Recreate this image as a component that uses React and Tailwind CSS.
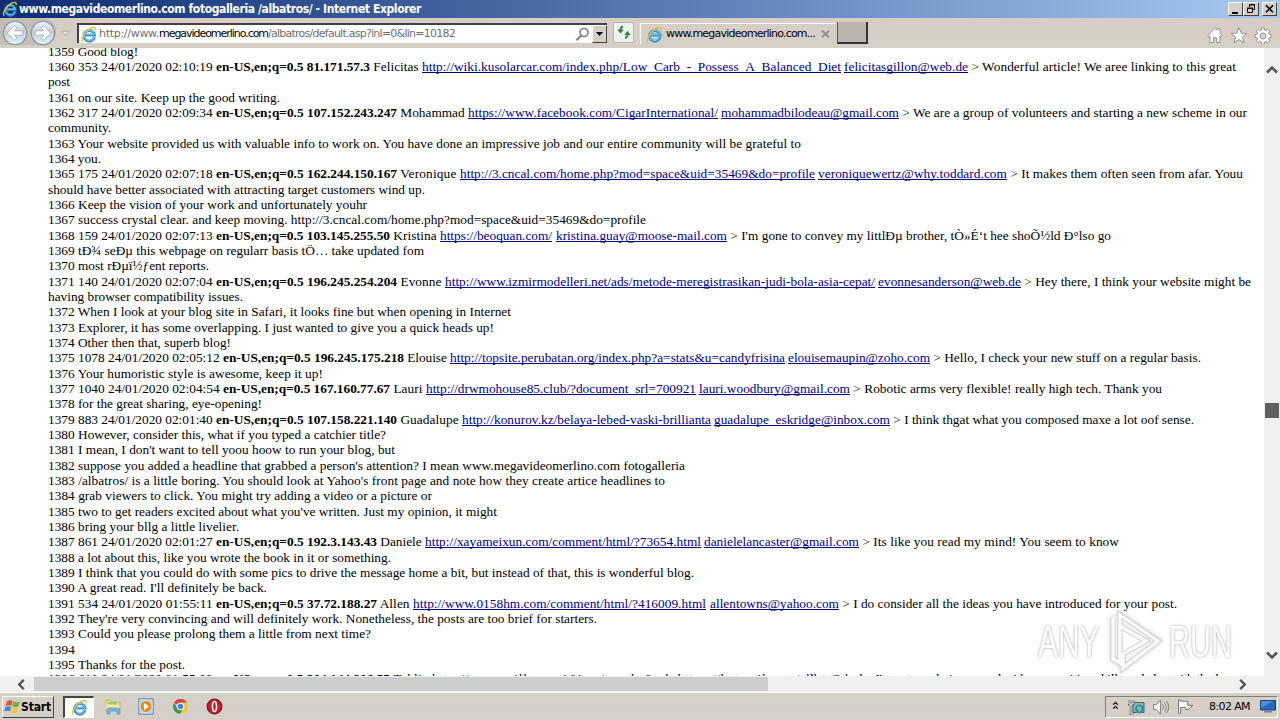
import React, { useLayoutEffect, useRef } from "react";

/* Text run stretched to a known width through letter spacing. */
function Fit({ w, className = "", children }) {
  const ref = useRef(null);
  useLayoutEffect(() => {
    const el = ref.current;
    el.style.letterSpacing = "0px";
    const natural = el.getBoundingClientRect().width;
    const n = el.textContent.length;
    if (w && n) el.style.letterSpacing = (w - natural) / n + "px";
  }, [w]);
  return (
    <span ref={ref} className={"inline-block whitespace-pre " + className}>
      {children}
    </span>
  );
}

/* Comment header: [prefix, bold, name, url, mail, message], [x of each run..., end] */
const lines = [
  ["1359 Good blog!", 138],
  [["1360 353 24/01/2020 02:10:19 ", "en-US,en;q=0.5 81.171.57.3", " Felicitas ", "http://wiki.kusolarcar.com/index.php/Low_Carb_-_Possess_A_Balanced_Diet", "felicitasgillon@web.de", " > Wonderful article! We aree linking to this great"], [216, 370, 422, 841, 844, 968, 1236]],
  ["post", 70],
  ["1361 on our site. Keep up the good writing.", 280],
  [["1362 317 24/01/2020 02:09:34 ", "en-US,en;q=0.5 107.152.243.247", " Mohammad ", "https://www.facebook.com/CigarInternational/", "mohammadbilodeau@gmail.com", " > We are a group of volunteers and starting a new scheme in our"], [216, 397, 468, 718, 721, 899, 1247]],
  ["community.", 111],
  ["1363 Your website provided us with valuable info to work on. You have done an impressive job and our entire community will be grateful to", 801],
  ["1364 you.", 101],
  [["1365 175 24/01/2020 02:07:18 ", "en-US,en;q=0.5 162.244.150.167", " Veronique ", "http://3.cncal.com/home.php?mod=space&uid=35469&do=profile", "veroniquewertz@why.toddard.com", " > It makes them often seen from afar. Youu"], [216, 397, 460, 815, 818, 1007, 1243]],
  ["should have better associated with attracting target customers wind up.", 425],
  ["1366 Keep the vision of your work and unfortunately youhr", 367],
  ["1367 success crystal clear. and keep moving. http://3.cncal.com/home.php?mod=space&uid=35469&do=profile", 646],
  [["1368 159 24/01/2020 02:07:13 ", "en-US,en;q=0.5 103.145.255.50", " Kristina ", "https://beoquan.com/", "kristina.guay@moose-mail.com", " > I'm gone to convey my littlÐµ brother, tÒ»É‘t hee shoÕ½ld Ð°lso go"], [216, 390, 440, 552, 556, 727, 1111]],
  ["1369 tÐ¾ seÐµ this webpage on regularr basis tÖ… take updated fom", 424],
  ["1370 most rÐµï½ƒent reports.", 209],
  [["1371 140 24/01/2020 02:07:04 ", "en-US,en;q=0.5 196.245.254.204", " Evonne ", "http://www.izmirmodelleri.net/ads/metode-meregistrasikan-judi-bola-asia-cepat/", "evonnesanderson@web.de", " > Hey there, I think your website might be"], [216, 397, 445, 875, 878, 1021, 1251]],
  ["having browser compatibility issues.", 243],
  ["1372 When I look at your blog site in Safari, it looks fine but when opening in Internet", 511],
  ["1373 Explorer, it has some overlapping. I just wanted to give you a quick heads up!", 494],
  ["1374 Other then that, superb blog!", 231],
  [["1375 1078 24/01/2020 02:05:12 ", "en-US,en;q=0.5 196.245.175.218", " Elouise ", "http://topsite.perubatan.org/index.php?a=stats&u=candyfrisina", "elouisemaupin@zoho.com", " > Hello, I check your new stuff on a regular basis."], [223, 404, 450, 785, 788, 930, 1201]],
  ["1376 Your humoristic style is awesome, keep it up!", 323],
  [["1377 1040 24/01/2020 02:04:54 ", "en-US,en;q=0.5 167.160.77.67", " Lauri ", "http://drwmohouse85.club/?document_srl=700921", "lauri.woodbury@gmail.com", " > Robotic arms very flexible! really high tech. Thank you"], [223, 390, 426, 696, 699, 850, 1162]],
  ["1378 for the great sharing, eye-opening!", 262],
  [["1379 883 24/01/2020 02:01:40 ", "en-US,en;q=0.5 107.158.221.140", " Guadalupe ", "http://konurov.kz/belaya-lebed-vaski-brillianta", "guadalupe_eskridge@inbox.com", " > I think thgat what you composed maxe a lot oof sense."], [216, 397, 462, 711, 714, 890, 1194]],
  ["1380 However, consider this, what if you typed a catchier title?", 386],
  ["1381 I mean, I don't want to tell yoou hoow to run your blog, but", 395],
  ["1382 suppose you added a headline that grabbed a person's attention? I mean www.megavideomerlino.com fotogalleria", 685],
  ["1383 /albatros/ is a little boring. You should look at Yahoo's front page and note how they create artice headlines to", 665],
  ["1384 grab viewers to click. You might try adding a video or a picture or", 432],
  ["1385 two to get readers excited about what you've written. Just my opinion, it might", 497],
  ["1386 bring your bllg a little livelier.", 239],
  [["1387 861 24/01/2020 02:01:27 ", "en-US,en;q=0.5 192.3.143.43", " Daniele ", "http://xayameixun.com/comment/html/?73654.html", "danielelancaster@gmail.com", " > Its like you read my mind! You seem to know"], [216, 377, 425, 701, 704, 859, 1119]],
  ["1388 a lot about this, like you wrote the book in it or something.", 391],
  ["1389 I think that you could do with some pics to drive the message home a bit, but instead of that, this is wonderful blog.", 694],
  ["1390 A great read. I'll definitely be back.", 267],
  [["1391 534 24/01/2020 01:55:11 ", "en-US,en;q=0.5 37.72.188.27", " Allen ", "http://www.0158hm.com/comment/html/?416009.html", "allentowns@yahoo.com", " > I do consider all the ideas you have introduced for your post."], [216, 377, 413, 706, 710, 839, 1177]],
  ["1392 They're very convincing and will definitely work. Nonetheless, the posts are too brief for starters.", 597],
  ["1393 Could you please prolong them a little from next time?", 371],
  ["1394", 75],
  ["1395 Thanks for the post.", 185],
  [["1396 610 24/01/2020 01:55:09 ", "en-US,en;q=0.5 204.144.206.55", " Tahlia ", "http://www.millerovo161.ru/go.php?url=https://hotmail.com/", "tahliaburton@yahoo.de", " > I'm extremely impressed with your writing skills and also with the layout"], [216, 390, 432, 800, 803, 862, 1247]],
];

function Line({ data, ends }) {
  if (typeof data === "string") {
    return (
      <div className="h-[15.333px]">
        <Fit w={ends - 48}>{data}</Fit>
      </div>
    );
  }
  const [a, b, c, d, e, f, g] = ends;
  const link = "text-[#000080] underline underline-offset-[1px] [text-decoration-skip-ink:none]";
  return (
    <div className="flex h-[15.333px] last:-mt-[1px]">
      <Fit w={a - 48}>{data[0]}</Fit>
      <Fit w={b - a} className="font-bold">{data[1]}</Fit>
      <Fit w={c - b}>{data[2]}</Fit>
      <Fit w={d - c} className={link}>{data[3]}</Fit>
      <Fit w={e - d}> </Fit>
      <Fit w={f - e} className={link}>{data[4]}</Fit>
      <Fit w={g - f}>{data[5]}</Fit>
    </div>
  );
}

function IELogo({ className }) {
  return (
    <svg className={className} viewBox="0 0 18 18" fill="none">
      <path d="M14.8 11.8A5.6 5.6 0 1 1 14.9 9.6H5.5" stroke="#2f8fd0" strokeWidth="3" />
      <path d="M14.4 12A5.4 5.4 0 1 1 14.8 9.2H5.5" stroke="#6fcdf5" strokeWidth="1.1" />
      <path d="M2.6 16.4C-.6 15 4.800 5 11.600 2.200c3.400-1.400 5.200-.4 4.200 2.600" stroke="#ecbb24" strokeWidth="1.500" />
    </svg>
  );
}

function NavArrow({ flip }) {
  return (
    <svg className={"h-[26px] w-[26px] shrink-0 " + (flip ? "-scale-x-100" : "")} viewBox="0 0 26 26">
      <defs>
        <linearGradient id="orb" x1="0" y1="0" x2="0" y2="1">
          <stop offset="0" stopColor="#f4f7fa" />
          <stop offset=".45" stopColor="#c3cdd6" />
          <stop offset="1" stopColor="#e1f7fd" />
        </linearGradient>
      </defs>
      <circle cx="13" cy="13" r="11.700" fill="url(#orb)" stroke="#8d9aa5" strokeWidth="1.300" />
      <path d="M4.800 13L12.500 5.600l2.600 2.600-2.700 2.600h8.400v4.400h-8.400l2.700 2.600-2.600 2.600z" fill="#fff" stroke="#9aa9b6" strokeWidth=".8" />
    </svg>
  );
}

const ui = "font-['DejaVu_Sans','DejaVu_Sans_Condensed',sans-serif]";
const uiBold = "font-['DejaVu_Sans_Condensed','DejaVu_Sans',sans-serif] font-bold";
const raised = "border border-t-white border-l-white border-r-[#404040] border-b-[#404040] bg-[#d4d0c8]";

function TitleBar() {
  return (
    <div className="flex h-[18px] items-center bg-gradient-to-r from-[#0f2c72] to-[#a6caf0] pl-[2px] pr-[3px]">
      <IELogo className="h-[16px] w-[16px]" />
      <div className={"ml-[1px] h-[18px] text-[12px] leading-[18px] text-white " + uiBold}>
        <Fit w={402}>www.megavideomerlino.com fotogalleria /albatros/ - Internet Explorer</Fit>
      </div>
      <div className="ml-auto flex h-[14px]">
        <div className={"h-[14px] w-[15px] " + raised}>
          <svg className="h-[12px] w-[13px]" viewBox="0 0 13 12"><path d="M3 9h6v2H3z" /></svg>
        </div>
        <div className={"h-[14px] w-[16px] " + raised}>
          <svg className="h-[12px] w-[14px]" viewBox="0 0 14 12" fill="none" stroke="#000">
            <path d="M5.500 4V1.500h5v5H9M5 2h6M3.500 5.500h5v4h-5zM3 5h6" />
          </svg>
        </div>
        <div className={"ml-[3px] h-[14px] w-[15px] " + raised}>
          <svg className="h-[12px] w-[13px]" viewBox="0 0 13 12" stroke="#000" strokeWidth="1.600"><path d="M3 2.300l7 7M10 2.300l-7 7" /></svg>
        </div>
      </div>
    </div>
  );
}

function ToolBar() {
  return (
    <div className="flex h-[30px] items-start bg-gradient-to-b from-[#d8cdc6] to-[#d5d0c6]">
      <div className="flex h-[27px] w-[56px] gap-[2px] rounded-r-[13px] bg-[#b9b4ae]/60 pl-[2px] pt-[2px]">
        <NavArrow />
        <NavArrow flip />
      </div>
      <svg className="mt-[12px] ml-[5px] h-[7px] w-[9px]" viewBox="0 0 10 7"><path d="M1 1h8L5 5.500z" fill="#e7dfe0" stroke="#b3a8aa" /></svg>
      <div className="mt-[5px] ml-[7px] flex h-[20px] w-[530px] items-center border-t-2 border-l-2 border-[#443f46] bg-white pl-[1px]">
        <IELogo className="h-[17px] w-[18px] shrink-0" />
        <div className={"ml-[1px] flex text-[11px] leading-[18px] text-[#6f6f6f] " + ui}>
          <Fit w={60}>http://www.</Fit>
          <Fit w={109} className="text-black">megavideomerlino.com</Fit>
          <Fit w={187}>/albatros/default.asp?inl=0&amp;lin=10182</Fit>
        </div>
        <svg className="ml-auto h-[15px] w-[15px]" viewBox="0 0 15 15" fill="none" stroke="#858585" strokeWidth="1.700">
          <circle cx="9" cy="5.500" r="4" /><path d="M6 8.700L1.400 13.200" strokeWidth="2.200" />
        </svg>
        <div className={"ml-[2px] flex h-[18px] w-[15px] items-center justify-center " + raised}>
          <svg className="h-[4px] w-[7px]" viewBox="0 0 7 4"><path d="M0 0h7L3.500 4z" /></svg>
        </div>
      </div>
      <div className="mt-[4px] ml-[6px] flex h-[21px] w-[21px] items-center justify-center rounded-[2px] border border-[#b5b6b3] bg-[#eff1ef]">
        <svg className="h-[15px] w-[16px]" viewBox="0 0 16 15" fill="none" stroke="#37803c" strokeWidth="1.800">
          <path d="M7 1.500Q4.500 2 4.500 5.500M9 13Q11.500 12.500 11.500 9" />
          <path d="M1.200 4.600h6.600L4.500 8.400zM8.200 9.900h6.600L11.500 6.100z" fill="#37803c" stroke="none" />
        </svg>
      </div>
      <div className="mt-[5px] ml-[6px] flex h-[21px] w-[196px] items-center border-l border-t border-[#fff] pl-[5px]">
        <IELogo className="h-[17px] w-[17px] shrink-0" />
        <div className={"ml-[3px] text-[11px] leading-[18px] text-black " + ui}>
          <Fit w={149}>www.megavideomerlino.com...</Fit>
        </div>
        <svg className="ml-[6px] h-[8px] w-[9px]" viewBox="0 0 9 8" stroke="#918f8c" strokeWidth="1.900"><path d="M1 .7l7 6.600M8 .7L1 7.300" /></svg>
      </div>
      <div className="mt-[4px] ml-[1px] h-[22px] w-[31px] border-r-2 border-b-2 border-l border-[#333] border-l-[#555] bg-[#bcb4ac]" />
      <svg className="mt-[9px] ml-auto h-[17px] w-[66px] shrink-0" viewBox="0 0 66 17" fill="#fff" stroke="#969290" strokeWidth="1">
        <path d="M1 8.200L8 1.200l2 2V1.700h3v4.500l2.500 2.300-1.300 1L13 8.700V15.500H9.500v-4.700h-3v4.700H3V9L1.800 9.800z" />
        <path d="M32 .8l2.300 5.300 5.600.4-4.400 3.600 1.500 5.600-5-3.100-5 3.100 1.500-5.600-4.400-3.600 5.600-.4z" />
        <path d="M54.700 1h2.600l.5 2 1.200.5 1.800-1.100 1.800 1.800-1.100 1.800.5 1.200 2 .5v2.600l-2 .5-.5 1.200 1.100 1.800-1.800 1.800-1.800-1.100-1.200.5-.5 2h-2.600l-.5-2-1.200-.5-1.800 1.100-1.800-1.800 1.100-1.800-.5-1.200-2-.5V7.700l2-.5.5-1.200-1.100-1.800 1.800-1.800 1.800 1.100 1.200-.5z" />
        <circle cx="56" cy="9" r="3" fill="#d5d0c8" />
      </svg>
      <div className="w-[7px]" />
    </div>
  );
}

function Chevron({ d, className }) {
  return (
    <svg className={className} viewBox="0 0 12 12" fill="none" stroke="#555" strokeWidth="2.600"><path d={d} /></svg>
  );
}

function Watermark() {
  return (
    <div className="absolute top-[563px] left-[1038px] flex items-center font-['Liberation_Sans',sans-serif] text-[44px] leading-[60px] text-white [text-shadow:0_0_2px_#aaa,0_0_4px_#ccc]">
      <span className="inline-block w-[68px]"><span className="inline-block origin-left scale-x-[0.68]">ANY</span></span>
      <svg className="h-[62px] w-[60px] overflow-visible [filter:drop-shadow(0_0_2px_#ccc)]" viewBox="0 0 58 62" fill="none">
        <path d="M14 4l38 26-35 27-12-7V6l9-2z" fill="#f4f4f4" />
        <path d="M16 17v26l22-13z" fill="#fff" />
        <g stroke="#d6d6d6" strokeWidth="5.500"><path d="M6 7v41l7 4V4l38 26-35 27V43l23-13-26-15" /></g>
        <g stroke="#fbfbfb" strokeWidth="3.200"><path d="M6 7v41l7 4V4l38 26-35 27V43l23-13-26-15" /></g>
      </svg>
      <span className="ml-[3px] inline-block w-[66px]"><span className="inline-block origin-left scale-x-[0.66]">RUN</span></span>
    </div>
  );
}

function TaskBar() {
  return (
    <div className="flex h-[28px] items-center border-t border-white bg-gradient-to-b from-[#d4d0c8] to-[#d7cec8] pl-[2px] pr-[2px]">
      <div className={"flex h-[22px] w-[52px] items-center pl-[1px] " + raised}>
        <svg className="h-[15px] w-[17px]" viewBox="0 0 17 15">
          <path d="M3 2.300Q6 .3 8.500 2L7.300 7Q4.500 5.500 1.700 7z" fill="#e0562b" />
          <path d="M9.300 2.500Q12.500 4 16 2.500L14.500 7.500Q11 9 8.200 7.300z" fill="#70b33c" />
          <path d="M1.500 8Q4.500 6.500 7 8L6 12.500Q3 11 .3 12.500z" fill="#4088dd" />
          <path d="M7.900 8.400Q11 10 14.200 8.500L13 13.500Q10 15 6.800 13.200z" fill="#f4c62f" />
        </svg>
        <div className={"text-[12px] leading-[18px] text-black " + uiBold}><Fit w={30}>Start</Fit></div>
      </div>
      <div className="ml-[9px] flex h-[22px] w-[31px] items-center justify-center border-t-2 border-l-2 border-[#444] border-r border-b border-r-white border-b-white bg-white">
        <IELogo className="h-[17px] w-[17px]" />
      </div>
      <svg className="ml-[10px] h-[17px] w-[18px]" viewBox="0 0 18 17">
        <path d="M2 2h5l1 2h8v8H2z" fill="#ecd677" stroke="#c8ad53" strokeWidth=".7" />
        <path d="M4 4h9v3H4z" fill="#9bcc86" />
        <path d="M1.500 6.500h14v4.500h-14z" fill="#f6e8a0" />
        <path d="M3 16v-4q0-2 2-2h9q2 0 2 2v4h-3v-3H6v3z" fill="#76b9e2" stroke="#458eb8" strokeWidth=".6" />
      </svg>
      <svg className="ml-[16px] h-[17px] w-[16px]" viewBox="0 0 16 17">
        <path d="M.7.700h14.600v15.600H.700z" fill="#b5d7ee" stroke="#6097c2" />
        <circle cx="8" cy="8.500" r="6" fill="#ee8a20" stroke="#fff" strokeWidth=".6" />
        <path d="M6 5l5 3.500L6 12z" fill="#fff" />
      </svg>
      <svg className="ml-[19px] h-[15px] w-[15px]" viewBox="0 0 16 16">
        <path d="M8 8L1.100 4A8 8 0 0 1 15 4H8z" fill="#d94636" />
        <path d="M1.100 4A8 8 0 0 0 7.500 16L11 10 5 10z" fill="#369b50" />
        <path d="M15 4H8l3.300 6L7.500 16A8 8 0 0 0 15 4z" fill="#f2c935" />
        <circle cx="8" cy="8" r="3.500" fill="#4384df" stroke="#fff" strokeWidth="1.100" />
      </svg>
      <svg className="ml-[18px] h-[17px] w-[17px]" viewBox="0 0 17 17">
        <circle cx="8.500" cy="8.500" r="7.300" fill="#c51f25" stroke="#83191a" strokeWidth="1.200" />
        <ellipse cx="8.500" cy="8.500" rx="2" ry="5" fill="#b01c20" stroke="#fff" strokeWidth="1.600" />
      </svg>
      <div className="ml-auto flex h-[22px] w-[173px] items-center border-t border-l border-r border-b border-[#808080] border-r-white border-b-white pl-[6px]">
        <svg className="-mt-[2px] h-[9px] w-[7px]" viewBox="0 0 7 10" fill="none" stroke="#000" strokeWidth="1.400"><path d="M1 4l2.500-2.500L6 4M1 8.500L3.500 6 6 8.500" /></svg>
        <svg className="ml-[9px] h-[16px] w-[17px]" viewBox="0 0 17 16">
          <path d="M5 3.500h11v10H5z" fill="#87b9b0" stroke="#45635f" />
          <circle cx="11.500" cy="10" r="4.500" fill="#348ea7" /><path d="M9 8l3-1 2 3-3 3z" fill="#81c491" />
          <path d="M1 1v4h4V1M3 5v10h3" fill="none" stroke="#555" strokeWidth="2.500" /><path d="M1 1v4h4V1M3 5v10h3" fill="none" stroke="#fff" />
        </svg>
        <svg className="ml-[7px] h-[16px] w-[18px]" viewBox="0 0 18 16" fill="none" stroke="#858585">
          <path d="M1.500 5.500h3L8.500 1v14l-4-4.500h-3z" fill="#f8f8f8" /><path d="M10.500 5q2 3 0 6M12.500 3.500q3.500 4.500 0 9M14.500 2q4.500 6 0 12" />
        </svg>
        <svg className="ml-[7px] h-[15px] w-[17px]" viewBox="0 0 17 15" fill="#fff" stroke="#777">
          <path d="M1.500 1v13.500h2V8.500h5.200v2h3l4-4.200h-5V2.200H3.500V1z" />
        </svg>
        <div className={"ml-[15px] text-[11px] leading-[18px] text-black " + ui}><Fit w={41}>8:02 AM</Fit></div>
        <svg className="ml-[10px] h-[13px] w-[16px]" viewBox="0 0 16 13">
          <path d="M.5.500h15v9.500H.500z" fill="#2569c0" stroke="#224071" /><path d="M1 1h12L1 8z" fill="#508bd5" /><path d="M4 11h8v1.500H4z" fill="#6d7f96" />
        </svg>
      </div>
    </div>
  );
}

export default function App() {
  return (
    <div className="flex h-[720px] w-[1280px] flex-col overflow-hidden bg-[#d4d0c8]">
      <TitleBar />
      <ToolBar />
      <div className="relative flex h-[628px] bg-white">
        <div className="h-full w-[1264px] overflow-hidden pl-[48px]">
          <div className="-mt-[4.300px] font-['Liberation_Serif',serif] text-[13.333px] leading-[15.333px] text-black">
            {lines.map(([data, ends], i) => <Line key={i} data={data} ends={ends} />)}
          </div>
        </div>
        <div className="flex h-full w-[16px] flex-col items-center bg-[#f0f0f0] pt-[16px] pb-[15px]">
          <Chevron className="h-[12px] w-[12px]" d="M1 8.500l5-5 5 5" />
          <div className="mt-[327px] h-[15px] w-[14px] bg-[#606060]" />
          <Chevron className="mt-auto h-[12px] w-[12px]" d="M1 3.500l5 5 5-5" />
        </div>
        <Watermark />
      </div>
      <div className="flex h-[16px] items-center bg-[#f0f0f0] pl-[16px]">
        <Chevron className="h-[11px] w-[11px]" d="M8.500 1l-5 5 5 5" />
        <div className="ml-[7px] h-[14px] w-[734px] bg-[#cdcdcd]" />
        <Chevron className="ml-[469px] h-[11px] w-[11px]" d="M3.500 1l5 5-5 5" />
      </div>
      <TaskBar />
    </div>
  );
}
